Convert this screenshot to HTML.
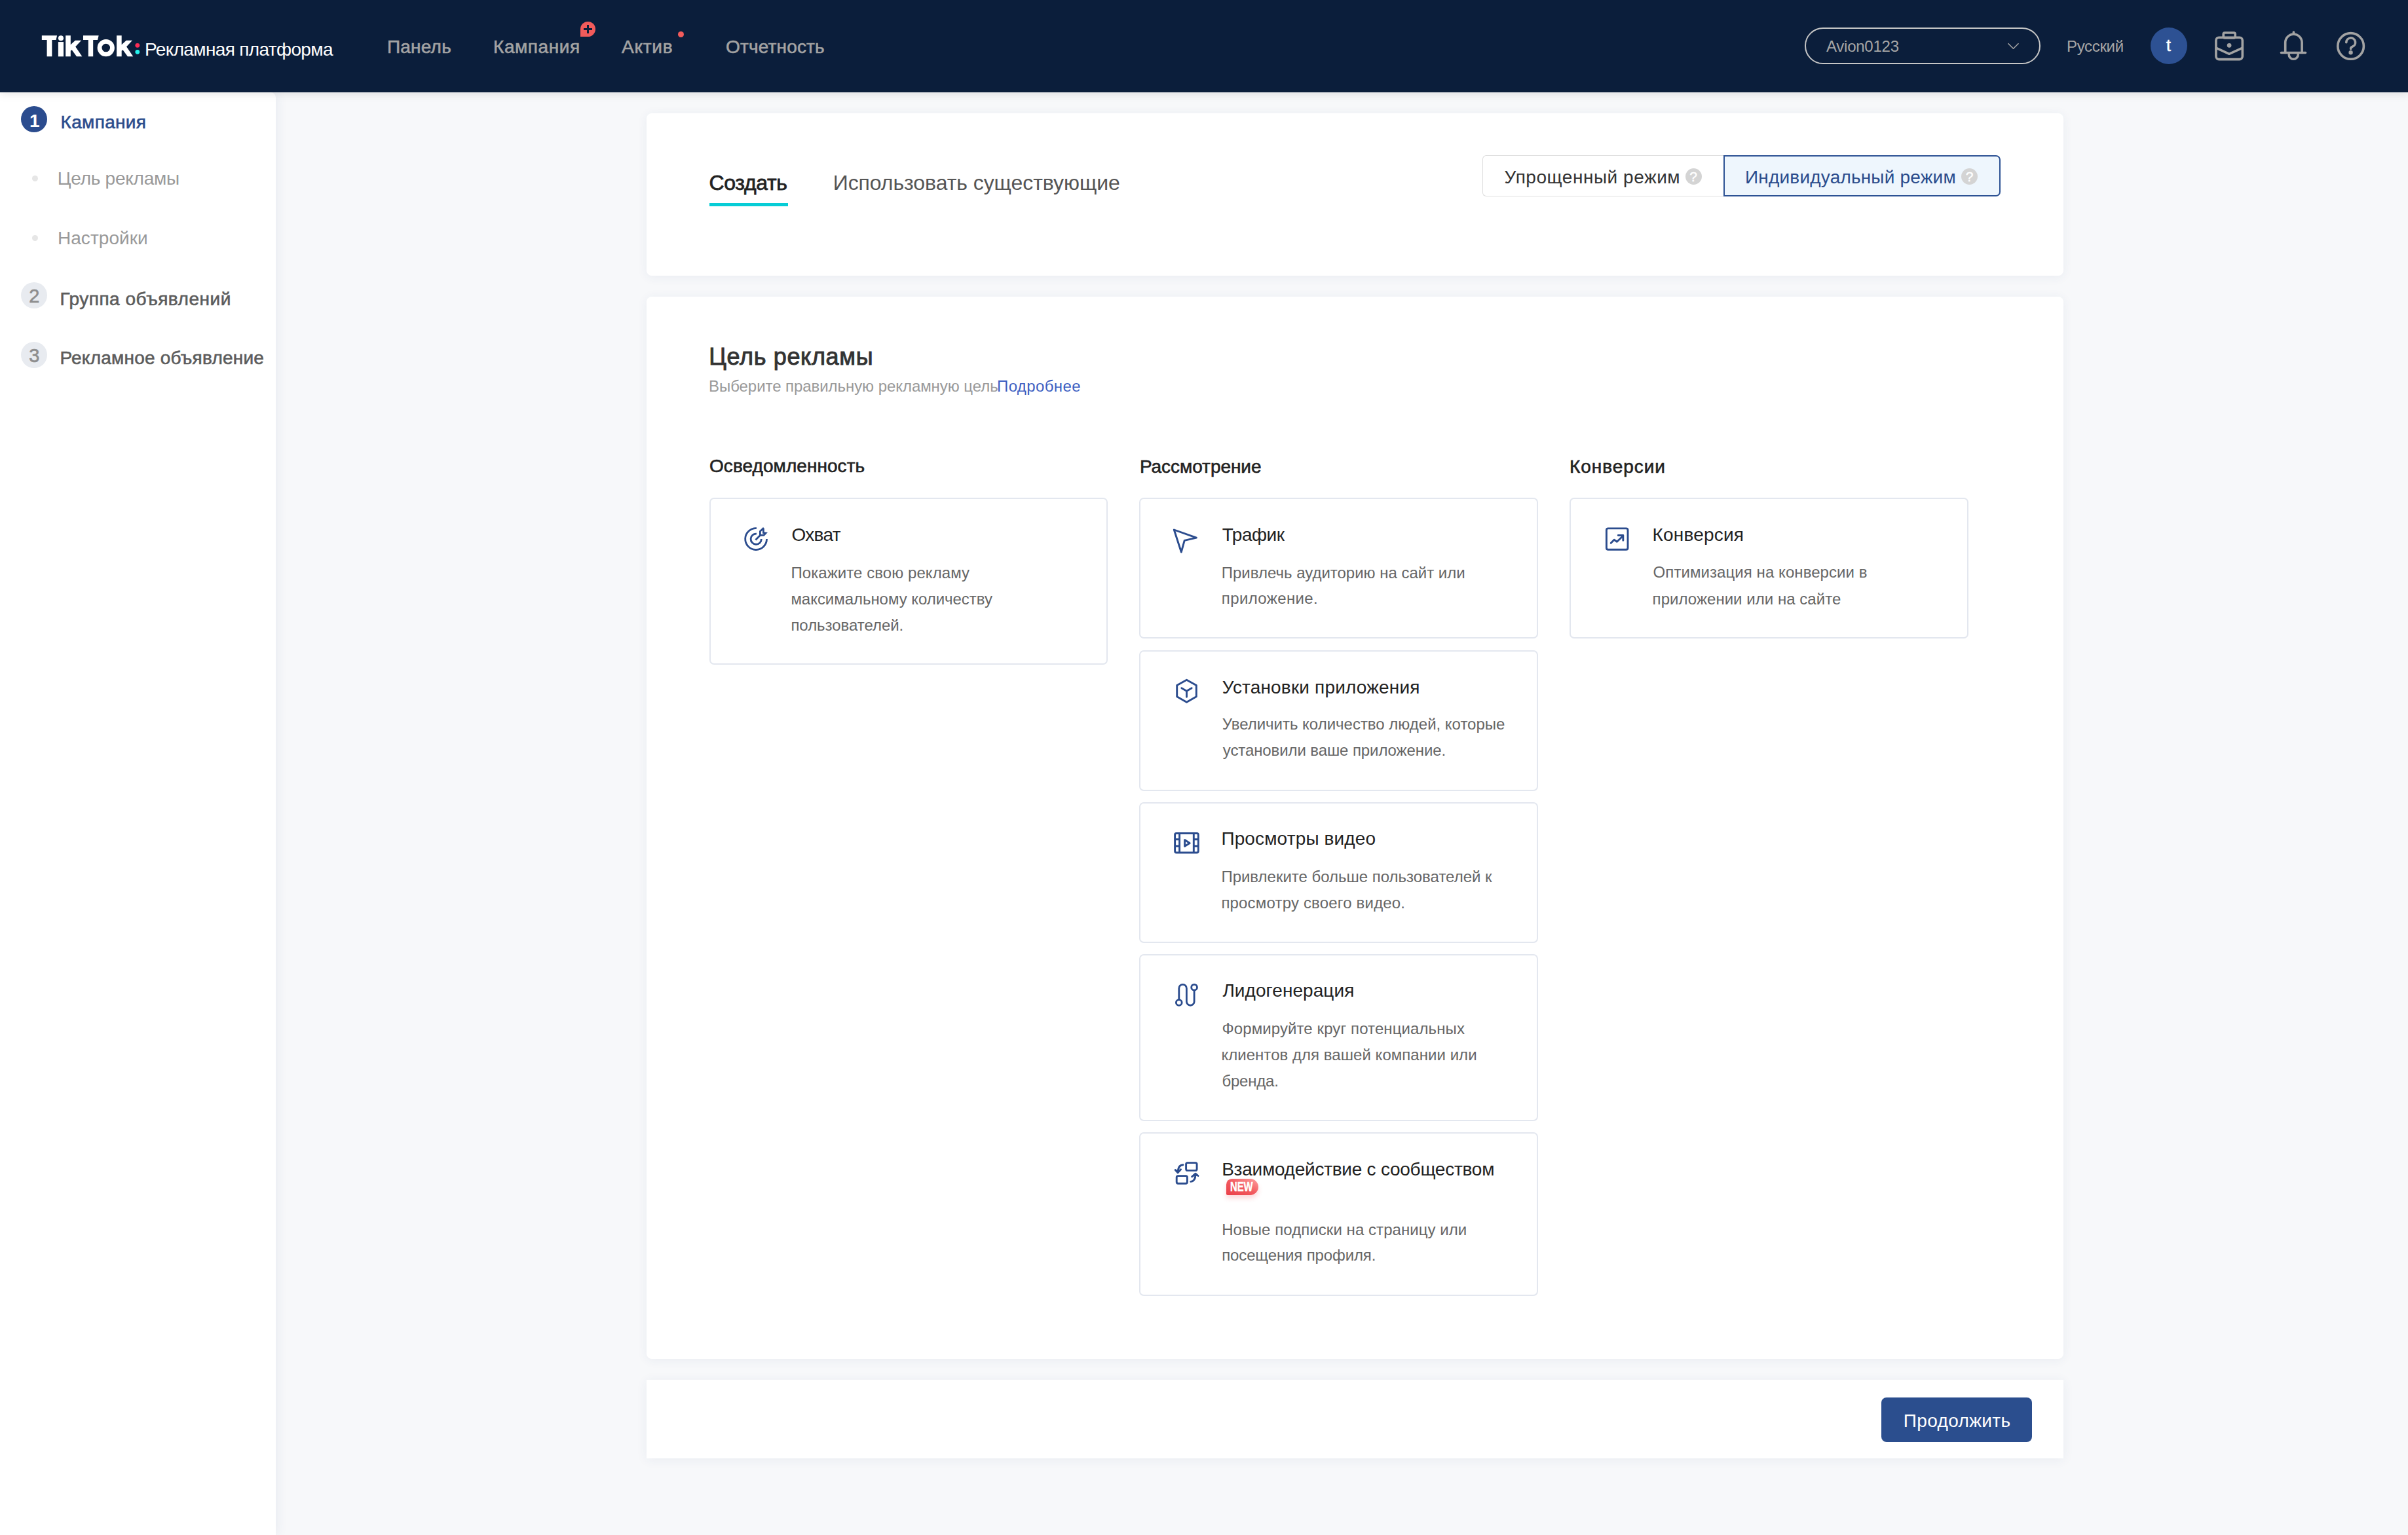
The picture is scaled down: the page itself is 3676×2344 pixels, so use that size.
<!DOCTYPE html>
<html><head><meta charset="utf-8"><style>
html,body{margin:0;padding:0;width:3676px;height:2344px;overflow:hidden;background:#f7f8fa;font-family:"Liberation Sans",sans-serif;}
.t{position:absolute;white-space:nowrap;}
.ic{position:absolute;}
.abs{position:absolute;}
#hdr{position:absolute;left:0;top:0;width:3676px;height:141px;background:#0b1e3b;box-shadow:0 3px 12px rgba(0,0,0,0.10)}
#side{position:absolute;left:0;top:141px;width:421px;height:2203px;background:#fff;border-top-right-radius:8px;box-shadow:3px 0 16px rgba(40,70,130,0.07)}
.card{position:absolute;background:#fff;border-radius:8px;box-shadow:0 2px 16px rgba(40,70,130,0.07)}
.oc{position:absolute;background:#fff;border:2px solid #e3e7ef;border-radius:7px;box-sizing:border-box}
</style></head><body>
<div id="side"></div>
<div class="card" style="left:987px;top:173px;width:2163px;height:248px"></div>
<div class="card" style="left:987px;top:453px;width:2163px;height:1622px"></div>
<div class="card" style="left:987px;top:2107px;width:2163px;height:120px;border-radius:0"></div>
<div class="oc" style="left:1083px;top:760px;width:608px;height:255px"></div>
<div class="oc" style="left:1739px;top:760px;width:609px;height:215px"></div>
<div class="oc" style="left:1739px;top:993px;width:609px;height:215px"></div>
<div class="oc" style="left:1739px;top:1224.5px;width:609px;height:215px"></div>
<div class="oc" style="left:1739px;top:1457px;width:609px;height:255px"></div>
<div class="oc" style="left:1739px;top:1728.5px;width:609px;height:250px"></div>
<div class="oc" style="left:2396px;top:760px;width:609px;height:215px"></div>
<div id="hdr">
<svg class="ic" style="left:55px;top:45px" width="170" height="50" viewBox="0 0 2408 708" fill="#fff">
<path d="M125 130 H455 L432 225 H345 V585 H235 V225 H125 Z"/><circle cx="538" cy="188" r="57"/><rect x="480" y="270" width="115" height="315"/>
<path d="M640 130 H748 V329 L848 237 H979 L853 370 L997 585 H878 L775 441 L748 462 V585 H640 Z"/>
<path d="M1020 130 H1355 L1332 225 H1235 V585 H1130 V225 H1020 Z"/>
<path fill-rule="evenodd" d="M1512 212 A186 186 0 1 1 1512 584 A186 186 0 1 1 1512 212 Z M1512 308 A89 89 0 1 0 1512 486 A89 89 0 1 0 1512 308 Z"/>
<path d="M1743 130 H1851 V329 L1951 237 H2082 L1956 370 L2100 585 H1981 L1878 441 L1851 462 V585 H1743 Z"/>
<circle cx="2193" cy="345" r="48" fill="#fe2c55"/><circle cx="2193" cy="486" r="48" fill="#25f4ee"/></svg><div class="abs" style="left:886px;top:33px;width:23px;height:23px;border-radius:50% 50% 50% 0;background:#f25b5b"></div><div class="abs" style="left:896.3px;top:38px;width:2.6px;height:13px;background:#0b1e3b"></div><div class="abs" style="left:891px;top:43.3px;width:13px;height:2.6px;background:#0b1e3b"></div><div class="abs" style="left:1034.5px;top:47.5px;width:9px;height:9px;border-radius:50%;background:#f25b5b"></div><div class="abs" style="left:2755px;top:41.5px;width:360px;height:56px;border:2px solid #c6c6c6;border-radius:28px;box-sizing:border-box"></div><div class="abs" style="left:3283px;top:41.5px;width:56px;height:56px;border-radius:50%;background:#2d5193"></div>
<svg class="ic" style="left:0;top:0" width="3676" height="140" viewBox="0 0 3676 140" fill="none" stroke="#a3a3a3" stroke-width="3.6" stroke-linecap="round" stroke-linejoin="round">
<rect x="3382.9" y="57.3" width="40.4" height="33.3" rx="4.5"/>
<rect x="3394.2" y="50" width="18" height="8" rx="2"/>
<path d="M3383.5 73.4 L3403 82.3 L3422.8 73.4"/>
<circle cx="3403.1" cy="69.3" r="1.6" fill="#a3a3a3"/>
<path d="M3488.7 80.5 V65 A12.7 12.7 0 0 1 3514.1 65 V80.5"/><path d="M3482.5 80.5 H3519.5"/><path d="M3494.2 83.2 A7 7 0 0 0 3508.2 83.2"/><path d="M3501.4 49 V52"/>
<circle cx="3588.6" cy="70.4" r="19.8"/>
<path d="M3581.8 64.8 A6.9 6.9 0 1 1 3591 71.3 C3589.5 71.9 3588.6 72.8 3588.6 74.2 V74.6"/>
<circle cx="3588.6" cy="80.3" r="1.4" fill="#a3a3a3"/>
<path d="M3065.5 66.2 L3073.5 74.2 L3081.5 66.2" stroke-width="1.6" stroke-linecap="butt"/>
</svg>
</div>
<div class="abs" style="left:32px;top:161.5px;width:40px;height:40px;border-radius:50%;background:#2b4c8e"></div><div class="abs" style="left:49px;top:268px;width:9px;height:9px;border-radius:50%;background:#e6e6e6"></div><div class="abs" style="left:49px;top:359px;width:9px;height:9px;border-radius:50%;background:#e6e6e6"></div><div class="abs" style="left:32px;top:430.5px;width:40px;height:40px;border-radius:50%;background:#e8ebf0"></div><div class="abs" style="left:32px;top:521.5px;width:40px;height:40px;border-radius:50%;background:#e8ebf0"></div><div class="abs" style="left:1083px;top:310px;width:120px;height:4.5px;background:#06cdd6"></div><div class="abs" style="left:2263px;top:237px;width:370px;height:63px;border:1.5px solid #dedede;border-radius:6px 0 0 6px;box-sizing:border-box;border-right:none"></div><div class="abs" style="left:2630.5px;top:237px;width:423px;height:63px;border:2px solid #2d5294;border-radius:0 7px 7px 0;background:#eef6fd;box-sizing:border-box"></div><div class="abs" style="left:2572.5px;top:257px;width:25px;height:25px;border-radius:50%;background:#d4d4d4;color:#fff;font:normal 21px/26px 'Liberation Sans';text-align:center;-webkit-text-stroke:0.4px #fff">?</div><div class="abs" style="left:2994px;top:257px;width:25px;height:25px;border-radius:50%;background:#d4d4d4;color:#fff;font:normal 21px/26px 'Liberation Sans';text-align:center;-webkit-text-stroke:0.4px #fff">?</div><div class="abs" style="left:1871.5px;top:1800px;width:49px;height:24.5px;border-radius:9px 13px 13px 2px;background:linear-gradient(205deg,#ffa0a0 0%,#f25a5f 50%,#ea3f48 100%);box-shadow:0 5px 7px rgba(240,80,90,0.22)"></div><div class="abs" style="left:1878px;top:1801.5px;font:bold 20px/20px 'Liberation Sans';color:#fff;transform:scaleX(0.74);transform-origin:0 0;white-space:nowrap;-webkit-text-stroke:0.5px #fff">NEW</div><div class="abs" style="left:2872px;top:2134px;width:230px;height:68px;border-radius:8px;background:#2b4e8e"></div>
<svg class="ic" style="left:1126px;top:795px" width="56" height="56" viewBox="0 0 56 56" fill="none" stroke="#2b4c8e" stroke-width="2.8" stroke-linejoin="miter">
<path d="M28.9 11.7 A16.4 16.4 0 1 0 44.5 28.1"/><path d="M28.9 20.1 A8.1 8.1 0 1 0 36.3 28.1"/><path d="M27.4 29.4 L34.4 22.4"/>
<path d="M34.4 22.3 L34.4 16.3 L38.9 12 L39.4 12.6 L39.4 18.6 L43 19.1 L39.9 22.3 Z"/></svg>
<svg class="ic" style="left:1780px;top:797px" width="56" height="56" viewBox="0 0 56 56" fill="none" stroke="#2b4c8e" stroke-width="2.9" stroke-linejoin="round">
<path d="M12.3 12 L46.4 24.2 L28.2 28.3 L23.3 46 Z"/></svg>
<svg class="ic" style="left:1783px;top:1027px" width="56" height="56" viewBox="0 0 56 56" fill="none" stroke="#2b4c8e" stroke-width="2.9" stroke-linejoin="round">
<path d="M28.5 11.3 L43.3 19.5 L43.3 36.8 L28.5 45.2 L13.7 36.8 L13.7 19.5 Z"/><path d="M20.8 23.8 L28.5 28.2 L36.2 23.8 M28.5 28.2 L28.5 37.2" stroke-linecap="round"/></svg>
<svg class="ic" style="left:1783px;top:1259px" width="56" height="56" viewBox="0 0 56 56" fill="none" stroke="#2b4c8e" stroke-width="2.9" stroke-linejoin="round">
<rect x="10.6" y="13.5" width="35.7" height="29.5" rx="2.2"/><path d="M17.6 13.5 V43 M39.3 13.5 V43 M10.6 22.8 H17.6 M10.6 33 H17.6 M39.3 22.8 H46.3 M39.3 33 H46.3"/>
<path d="M25.6 23.6 L33.2 28.4 L25.6 33.2 Z"/></svg>
<svg class="ic" style="left:1783px;top:1491px" width="56" height="56" viewBox="0 0 56 56" fill="none" stroke="#2b4c8e" stroke-width="2.8" stroke-linecap="round">
<circle cx="16.8" cy="40" r="4.4"/><circle cx="40.1" cy="16.7" r="4.4"/>
<path d="M16.8 35.6 V18.2 A5.8 5.8 0 0 1 28.4 18.2 V38.4 A5.8 5.8 0 0 0 40.1 38.4 V21.1"/></svg>
<svg class="ic" style="left:1783px;top:1763px" width="56" height="56" viewBox="0 0 56 56" fill="none" stroke="#2b4c8e" stroke-width="2.9" stroke-linecap="round" stroke-linejoin="round">
<rect x="27.6" y="12.6" width="16.5" height="11.8" rx="2.2"/><rect x="13.2" y="32.6" width="16.2" height="11.6" rx="2.2"/>
<path d="M23 15.7 C18.5 15.9 15.4 19.5 15.2 26.5"/><path d="M11.2 23.6 L15 27.8 L19.6 22.8" fill="#2b4c8e"/>
<path d="M34.8 41.4 C39.4 41 41.9 37.5 42 30.5"/><path d="M36.6 33.8 L42 29.2 L46 32.5" fill="#2b4c8e"/></svg>
<svg class="ic" style="left:2440px;top:795px" width="56" height="56" viewBox="0 0 56 56" fill="none" stroke="#2b4c8e" stroke-width="2.9" stroke-linecap="round" stroke-linejoin="round">
<rect x="12.4" y="11.9" width="32.6" height="32.4" rx="2.6"/><path d="M19.2 34.2 L24.1 29.3 L28.4 32.3 L37 24"/><path d="M30.3 22.5 H37.8 V30.2" fill="none"/></svg>
<div class="t" style="left:221.0px;top:62.1px;font-size:28px;line-height:28px;font-weight:400;color:#fff;letter-spacing:-0.64px;">Рекламная платформа</div>
<div class="t" style="left:591.0px;top:58.3px;font-size:28px;line-height:28px;font-weight:400;color:#a3a3a3;letter-spacing:0.20px;-webkit-text-stroke:0.60px #a3a3a3;">Панель</div>
<div class="t" style="left:753.0px;top:58.3px;font-size:28px;line-height:28px;font-weight:400;color:#a3a3a3;letter-spacing:0.57px;-webkit-text-stroke:0.60px #a3a3a3;">Кампания</div>
<div class="t" style="left:949.0px;top:58.3px;font-size:28px;line-height:28px;font-weight:400;color:#a3a3a3;letter-spacing:0.75px;-webkit-text-stroke:0.60px #a3a3a3;">Актив</div>
<div class="t" style="left:1108.0px;top:58.3px;font-size:28px;line-height:28px;font-weight:400;color:#a3a3a3;letter-spacing:0.17px;-webkit-text-stroke:0.60px #a3a3a3;">Отчетность</div>
<div class="t" style="left:2788.0px;top:59.4px;font-size:24px;line-height:24px;font-weight:400;color:#a6a6a6;letter-spacing:-0.25px;">Avion0123</div>
<div class="t" style="left:3155.0px;top:59.4px;font-size:24px;line-height:24px;font-weight:400;color:#a6a6a6;letter-spacing:-0.33px;">Русский</div>
<div class="t" style="left:3307.0px;top:57.3px;font-size:25px;line-height:25px;font-weight:400;color:#fff;letter-spacing:0.00px;-webkit-text-stroke:0.60px #fff;">t</div>
<div class="t" style="left:45.0px;top:170.6px;font-size:28px;line-height:28px;font-weight:700;color:#fff;letter-spacing:0.00px;">1</div>
<div class="t" style="left:92.5px;top:173.4px;font-size:28px;line-height:28px;font-weight:400;color:#2b4c8c;letter-spacing:0.34px;-webkit-text-stroke:0.60px #2b4c8c;">Кампания</div>
<div class="t" style="left:87.8px;top:258.5px;font-size:28px;line-height:28px;font-weight:400;color:#999;letter-spacing:-0.25px;">Цель рекламы</div>
<div class="t" style="left:87.9px;top:349.7px;font-size:28px;line-height:28px;font-weight:400;color:#999;letter-spacing:0.07px;">Настройки</div>
<div class="t" style="left:44.2px;top:437.8px;font-size:29px;line-height:29px;font-weight:400;color:#8e8e8e;letter-spacing:0.00px;-webkit-text-stroke:0.64px #8e8e8e;">2</div>
<div class="t" style="left:91.4px;top:442.5px;font-size:28px;line-height:28px;font-weight:400;color:#5c5c5c;letter-spacing:0.51px;-webkit-text-stroke:0.60px #5c5c5c;">Группа объявлений</div>
<div class="t" style="left:44.2px;top:529.0px;font-size:29px;line-height:29px;font-weight:400;color:#8e8e8e;letter-spacing:0.00px;-webkit-text-stroke:0.64px #8e8e8e;">3</div>
<div class="t" style="left:91.4px;top:533.4px;font-size:28px;line-height:28px;font-weight:400;color:#5c5c5c;letter-spacing:0.22px;-webkit-text-stroke:0.60px #5c5c5c;">Рекламное объявление</div>
<div class="t" style="left:1082.4px;top:263.4px;font-size:32px;line-height:32px;font-weight:400;color:#222;letter-spacing:-0.33px;-webkit-text-stroke:0.76px #222;">Создать</div>
<div class="t" style="left:1271.7px;top:263.4px;font-size:32px;line-height:32px;font-weight:400;color:#555;letter-spacing:-0.06px;">Использовать существующие</div>
<div class="t" style="left:2296.6px;top:257.1px;font-size:28px;line-height:28px;font-weight:400;color:#333;letter-spacing:0.53px;">Упрощенный режим</div>
<div class="t" style="left:2664.0px;top:257.1px;font-size:28px;line-height:28px;font-weight:400;color:#2b4c8c;letter-spacing:0.19px;">Индивидуальный режим</div>
<div class="t" style="left:1082.3px;top:526.5px;font-size:36px;line-height:36px;font-weight:400;color:#333;letter-spacing:0.65px;-webkit-text-stroke:0.92px #333;">Цель рекламы</div>
<div class="t" style="left:1082.0px;top:578.0px;font-size:24px;line-height:24px;font-weight:400;color:#999;letter-spacing:-0.06px;">Выберите правильную рекламную цель</div>
<div class="t" style="left:1522.0px;top:578.0px;font-size:24px;line-height:24px;font-weight:400;color:#3d5fc2;letter-spacing:0.38px;">Подробнее</div>
<div class="t" style="left:1083.0px;top:698.2px;font-size:28px;line-height:28px;font-weight:400;color:#222;letter-spacing:0.06px;-webkit-text-stroke:0.60px #222;">Осведомленность</div>
<div class="t" style="left:1739.9px;top:698.6px;font-size:28px;line-height:28px;font-weight:400;color:#222;letter-spacing:-0.05px;-webkit-text-stroke:0.60px #222;">Рассмотрение</div>
<div class="t" style="left:2396.0px;top:698.8px;font-size:28px;line-height:28px;font-weight:400;color:#222;letter-spacing:0.95px;-webkit-text-stroke:0.60px #222;">Конверсии</div>
<div class="t" style="left:1208.4px;top:802.9px;font-size:28px;line-height:28px;font-weight:400;color:#222;letter-spacing:-0.68px;">Охват</div>
<div class="t" style="left:1207.4px;top:862.7px;font-size:24px;line-height:24px;font-weight:400;color:#666;letter-spacing:0.07px;">Покажите свою рекламу</div>
<div class="t" style="left:1207.4px;top:902.5px;font-size:24px;line-height:24px;font-weight:400;color:#666;letter-spacing:-0.04px;">максимальному количеству</div>
<div class="t" style="left:1207.4px;top:942.8px;font-size:24px;line-height:24px;font-weight:400;color:#666;letter-spacing:-0.04px;">пользователей.</div>
<div class="t" style="left:1865.8px;top:803.2px;font-size:28px;line-height:28px;font-weight:400;color:#222;letter-spacing:-0.48px;">Трафик</div>
<div class="t" style="left:1864.8px;top:862.7px;font-size:24px;line-height:24px;font-weight:400;color:#666;letter-spacing:-0.01px;">Привлечь аудиторию на сайт или</div>
<div class="t" style="left:1864.8px;top:902.1px;font-size:24px;line-height:24px;font-weight:400;color:#666;letter-spacing:0.37px;">приложение.</div>
<div class="t" style="left:1865.8px;top:1035.5px;font-size:28px;line-height:28px;font-weight:400;color:#222;letter-spacing:0.17px;">Установки приложения</div>
<div class="t" style="left:1865.8px;top:1094.3px;font-size:24px;line-height:24px;font-weight:400;color:#666;letter-spacing:-0.01px;">Увеличить количество людей, которые</div>
<div class="t" style="left:1866.8px;top:1134.4px;font-size:24px;line-height:24px;font-weight:400;color:#666;letter-spacing:-0.10px;">установили ваше приложение.</div>
<div class="t" style="left:1864.4px;top:1267.3px;font-size:28px;line-height:28px;font-weight:400;color:#222;letter-spacing:0.14px;">Просмотры видео</div>
<div class="t" style="left:1864.4px;top:1326.7px;font-size:24px;line-height:24px;font-weight:400;color:#666;letter-spacing:-0.01px;">Привлеките больше пользователей к</div>
<div class="t" style="left:1864.4px;top:1366.5px;font-size:24px;line-height:24px;font-weight:400;color:#666;letter-spacing:0.18px;">просмотру своего видео.</div>
<div class="t" style="left:1866.4px;top:1499.3px;font-size:28px;line-height:28px;font-weight:400;color:#222;letter-spacing:0.07px;">Лидогенерация</div>
<div class="t" style="left:1865.4px;top:1559.1px;font-size:24px;line-height:24px;font-weight:400;color:#666;letter-spacing:0.10px;">Формируйте круг потенциальных</div>
<div class="t" style="left:1864.4px;top:1598.9px;font-size:24px;line-height:24px;font-weight:400;color:#666;letter-spacing:0.04px;">клиентов для вашей компании или</div>
<div class="t" style="left:1865.4px;top:1638.9px;font-size:24px;line-height:24px;font-weight:400;color:#666;letter-spacing:-0.20px;">бренда.</div>
<div class="t" style="left:1865.2px;top:1771.6px;font-size:28px;line-height:28px;font-weight:400;color:#222;letter-spacing:-0.25px;">Взаимодействие с сообществом</div>
<div class="t" style="left:1865.2px;top:1865.7px;font-size:24px;line-height:24px;font-weight:400;color:#666;letter-spacing:0.06px;">Новые подписки на страницу или</div>
<div class="t" style="left:1865.2px;top:1905.1px;font-size:24px;line-height:24px;font-weight:400;color:#666;letter-spacing:-0.13px;">посещения профиля.</div>
<div class="t" style="left:2522.6px;top:803.2px;font-size:28px;line-height:28px;font-weight:400;color:#222;letter-spacing:0.18px;">Конверсия</div>
<div class="t" style="left:2523.6px;top:862.2px;font-size:24px;line-height:24px;font-weight:400;color:#666;letter-spacing:0.07px;">Оптимизация на конверсии в</div>
<div class="t" style="left:2522.6px;top:902.6px;font-size:24px;line-height:24px;font-weight:400;color:#666;letter-spacing:0.04px;">приложении или на сайте</div>
<div class="t" style="left:2905.8px;top:2155.7px;font-size:28px;line-height:28px;font-weight:400;color:#fff;letter-spacing:0.36px;">Продолжить</div>
</body></html>
